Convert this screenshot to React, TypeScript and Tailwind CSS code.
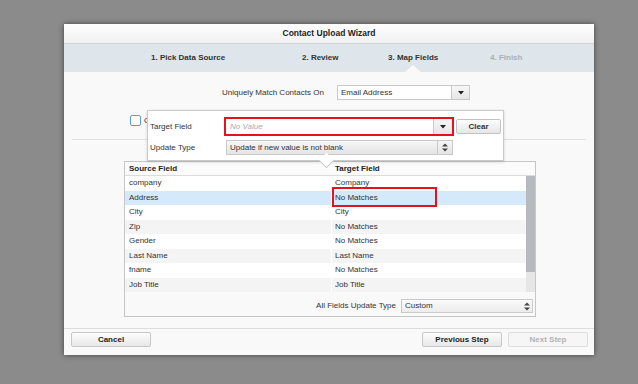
import React from "react";

const rows: [string, string][] = [
  ["company", "Company"],
  ["Address", "No Matches"],
  ["City", "City"],
  ["Zip", "No Matches"],
  ["Gender", "No Matches"],
  ["Last Name", "Last Name"],
  ["fname", "No Matches"],
  ["Job Title", "Job Title"],
];

function Down() {
  return (
    <svg width="6" height="4" viewBox="0 0 6 4">
      <polygon points="0,0 6,0 3,3.5" fill="#222" />
    </svg>
  );
}

function UpDown() {
  return (
    <svg width="6" height="9" viewBox="0 0 6 9">
      <polygon points="0,3.5 6,3.5 3,0.5" fill="#444" />
      <polygon points="0,5.5 6,5.5 3,8.5" fill="#444" />
    </svg>
  );
}

export default function App() {
  return (
    <div className="w-[638px] h-[384px] bg-[#8b8b8b] overflow-hidden pt-[24px] pl-[64px] font-['Liberation_Sans',Arial,sans-serif] text-[8px] text-[#333]">
      <div className="w-[530px] h-[331px] flex flex-col bg-[#f9f9f9] shadow-[0_0_5px_rgba(0,0,0,0.55)]">
        {/* Title */}
        <div className="h-[20px] flex items-center justify-center bg-gradient-to-b from-[#fefefe] to-[#f1f1f1] border-b border-[#d4d4d4] font-bold text-[8.5px] text-[#222]">
          Contact Upload Wizard
        </div>
        {/* Steps */}
        <div className="relative h-[28px] bg-[#dee5eb] flex items-center pl-[87px] font-bold text-[#333]">
          <div className="w-[151px]">1. Pick Data Source</div>
          <div className="w-[86px]">2. Review</div>
          <div className="w-[102px]">3. Map Fields</div>
          <div className="text-[#a9b0b6]">4. Finish</div>
          <div className="absolute bottom-0 left-[341px] w-0 h-0 border-l-[8px] border-r-[8px] border-b-[7px] border-l-transparent border-r-transparent border-b-[#f9f9f9]" />
        </div>
        {/* Content */}
        <div className="relative flex-1 flex flex-col">
          <div className="mt-[13px] flex items-center pl-[158px]">
            <div className="w-[115px]">Uniquely Match Contacts On</div>
            <div className="w-[133px] h-[15px] bg-white border border-[#c9c9c9] flex items-center">
              <div className="flex-1 pl-[3px]">Email Address</div>
              <div className="w-[18px] h-full border-l border-[#c9c9c9] bg-gradient-to-b from-[#f7f7f7] to-[#e6e6e6] flex items-center justify-center">
                <Down />
              </div>
            </div>
          </div>
          <div className="mt-[15px] ml-[66px] flex items-center h-[11px]">
            <div className="w-[11px] h-[11px] rounded-[2px] border border-[#5b9bd5] bg-white" />
            <div className="ml-[3px] w-[4px] overflow-hidden whitespace-nowrap">Create new contacts</div>
          </div>
          <div className="mt-[13px] mx-[8px] h-px bg-[#e0e0e0]" />
          {/* Table box */}
          <div className="relative mt-[21px] ml-[60px] w-[412px] h-[156px] border border-[#c6c6c6] bg-[#f9f9f9] flex flex-col">
            <div className="h-[14px] flex items-center bg-[#fbfbfb] border-b border-[#dcdcdc] font-bold text-[#222]">
              <div className="w-[207px] pl-[4px]">Source Field</div>
              <div className="pl-[3px]">Target Field</div>
            </div>
            <div className="h-[116px] flex">
              <div className="w-[401px] flex flex-col">
                {rows.map(([s, t], i) => (
                  <div
                    key={s}
                    className={
                      "h-[14.5px] flex items-center " +
                      (i === 1 ? "bg-[#d4e9f9]" : i % 2 === 1 ? "bg-[#f4f4f4]" : "bg-white")
                    }
                  >
                    <div className="w-[207px] h-full flex items-center pl-[4px] border-r border-white">{s}</div>
                    <div className="pl-[3px]">{t}</div>
                  </div>
                ))}
              </div>
              <div className="w-[9px] h-full bg-[#e6e6e6] flex flex-col">
                <div className="h-[96px] bg-[#b6babe]" />
              </div>
            </div>
            <div className="flex-1 flex items-start justify-end pt-[7px] pr-[2px]">
              <div className="mr-[5px] leading-[14px]">All Fields Update Type</div>
              <div className="w-[132px] h-[14px] border border-[#c9c9c9] bg-gradient-to-b from-[#fafafa] to-[#ececec] flex items-center">
                <div className="flex-1 pl-[3px]">Custom</div>
                <div className="w-[10px] h-full flex items-center justify-center">
                  <UpDown />
                </div>
              </div>
            </div>
            {/* red annotation */}
            <div className="absolute left-[207px] top-[25px] w-[105px] h-[20px] border-2 border-[#e3121c]" />
          </div>
          {/* Popover */}
          <div className="absolute left-[83px] top-[38px] w-[357px] h-[51px] bg-white border border-[#cacaca] shadow-[0_1px_3px_rgba(0,0,0,0.15)] px-[2px] pt-[6px]">
            <div className="flex items-center h-[19px]">
              <div className="w-[74px]">Target Field</div>
              <div className="w-[230px] h-[19px] border-2 border-[#e3121c] bg-white flex items-center">
                <div className="flex-1 pl-[4px] italic text-[#a8a8a8]">No Value</div>
                <div className="w-[19px] h-full border-l border-[#c9c9c9] bg-gradient-to-b from-[#f7f7f7] to-[#e6e6e6] flex items-center justify-center">
                  <Down />
                </div>
              </div>
              <div className="ml-[2px] w-[45px] h-[15px] border border-[#c2c2c2] rounded-[2px] bg-gradient-to-b from-[#fdfdfd] to-[#e6e6e6] flex items-center justify-center font-bold text-[#333]">
                Clear
              </div>
            </div>
            <div className="flex items-center mt-[4px] h-[15px]">
              <div className="w-[76px]">Update Type</div>
              <div className="w-[227px] h-[15px] border border-[#c9c9c9] bg-gradient-to-b from-[#f6f6f6] to-[#e4e4e4] flex items-center">
                <div className="flex-1 pl-[3px]">Update if new value is not blank</div>
                <div className="w-[15px] h-full border-l border-[#c9c9c9] flex items-center justify-center">
                  <UpDown />
                </div>
              </div>
            </div>
            <div className="absolute left-[173px] bottom-[-6px] w-[11px] h-[11px] rotate-45 bg-white border-r border-b border-[#cacaca]" />
          </div>
        </div>
        {/* Footer */}
        <div className="h-[27px] border-t border-[#dcdcdc] flex items-start pt-[3px] pl-[7px] pr-[6px]">
          <div className="w-[80px] h-[15px] border border-[#c6c6c6] rounded-[2px] bg-gradient-to-b from-[#fdfdfd] to-[#e7e7e7] flex items-center justify-center font-bold text-[#222]">
            Cancel
          </div>
          <div className="flex-1" />
          <div className="w-[80px] h-[15px] border border-[#c6c6c6] rounded-[2px] bg-gradient-to-b from-[#fdfdfd] to-[#e7e7e7] flex items-center justify-center font-bold text-[#222]">
            Previous Step
          </div>
          <div className="ml-[6px] w-[80px] h-[15px] border border-[#dddddd] rounded-[2px] bg-[#f6f6f6] flex items-center justify-center font-bold text-[#b3b3b3]">
            Next Step
          </div>
        </div>
      </div>
    </div>
  );
}
